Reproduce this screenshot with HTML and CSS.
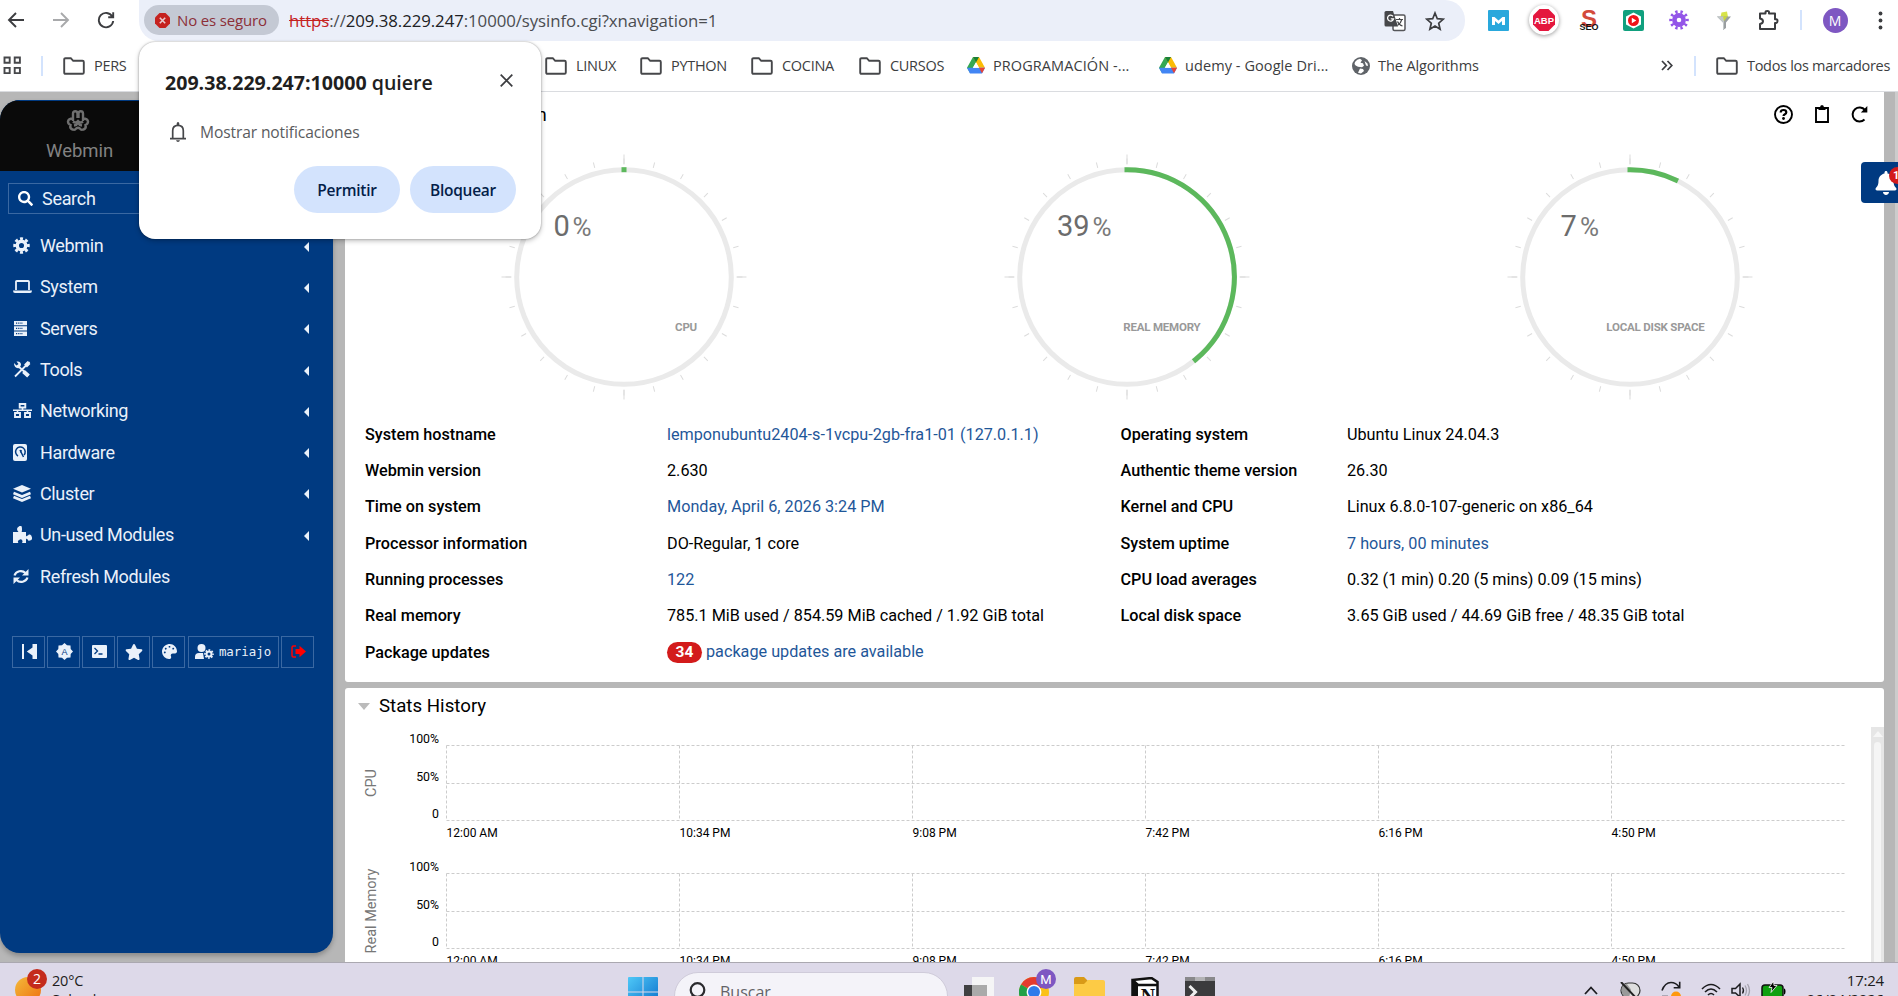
FILE: index.html
```
<!DOCTYPE html>
<html lang="es">
<head>
<meta charset="utf-8">
<title>System Information</title>
<link rel="stylesheet" href="styles.css">
</head>
<body>
<svg class="defs" width="0" height="0" aria-hidden="true">
  <symbol id="folder" viewBox="0 0 22 18"><path d="M1.2 2.5q0-1.3 1.3-1.3h5.3l2.4 2.6h9.3q1.3 0 1.3 1.3v10.4q0 1.3-1.3 1.3h-17q-1.3 0-1.3-1.3z" fill="none" stroke="#46474a" stroke-width="1.9"/></symbol>
  <symbol id="drive" viewBox="0 0 18 17"><path d="M6 0h6L6 10.5 3 16 0 10.8z" fill="#34a853"/><path d="M6 0h6l6 10.8h-6z" fill="#fbbc04"/><path d="M6 0h6L9 5.4z" fill="#188038"/><path d="M0 10.8h18L15 16.5H3z" fill="#4285f4"/><path d="M12 10.8h6L15 16.3z" fill="#ea4335"/><path d="M9 5.6l3 5.2H6z" fill="#fff"/></symbol>
  <symbol id="cog" viewBox="0 0 20 20"><circle cx="10" cy="10" r="5" fill="none" stroke="currentColor" stroke-width="4"/><circle cx="10" cy="10" r="8" fill="none" stroke="currentColor" stroke-width="3.4" pathLength="80" stroke-dasharray="5.6 4.4" stroke-dashoffset="2.8"/></symbol>
</svg>

<div class="screen">
  <header class="toolbar">
    <svg class="c" width="18" height="18" viewBox="0 0 18 18"><path d="M17 9H2M9 2L2 9l7 7" fill="none" stroke="#3c3d40" stroke-width="1.9"/></svg>
    <svg class="c" width="18" height="18" viewBox="0 0 18 18"><path d="M1 9h15M9 2l7 7-7 7" fill="none" stroke="#a8a9ab" stroke-width="1.9"/></svg>
    <svg class="c" width="18" height="18" viewBox="0 0 18 18"><path d="M15.3 5.5A7.2 7.2 0 1 0 16.2 10M16.2 1.2v5h-5" fill="none" stroke="#3c3d40" stroke-width="1.9"/></svg>
    <div class="omnibox">
      <span class="chip"><svg width="15" height="15" viewBox="0 0 15 15"><path d="M4.5 0h6L15 4.5v6L10.500 15h-6L0 10.500v-6z" fill="#c5221f"/><path d="M4.800 4.800l5.400 5.400M10.200 4.800l-5.400 5.400" stroke="#e9ccd0" stroke-width="1.600"/></svg>No es seguro</span>
      <span class="url"><s>https</s>://<b>209.38.229.247</b>:10000/sysinfo.cgi?xnavigation=1</span>
      <svg class="tr" width="22" height="22" viewBox="0 0 22 22"><rect x="9" y="5" width="12" height="15.500" rx="1.500" fill="#fff" stroke="#55565a" stroke-width="1.500"/><path d="M2 1h7l5 15.500H2q-1.500 0-1.500-1.500V2.500Q.5 1 2 1z" fill="#46474a"/><path d="M9 6.300A3 3 0 1 0 9.500 8.800H6.800" fill="none" stroke="#fff" stroke-width="1.300"/><path d="M12 9.500h7M15.500 8v1.500M17.800 9.500q-1 4-4.300 6M13.500 11.500q1.500 3.500 5 4.500" fill="none" stroke="#46474a" stroke-width="1.200"/></svg>
      <svg width="20" height="20" viewBox="0 0 20 20"><path d="M10 2l2.300 5.700 6 .5-4.600 4 1.400 6L10 15l-5.100 3.200 1.400-6-4.600-4 6-.5z" fill="none" stroke="#3c3d40" stroke-width="1.700"/></svg>
    </div>
    <div class="exts">
      <svg width="21" height="21" viewBox="0 0 21 21"><rect width="21" height="21" rx="1" fill="#29a8dc"/><path d="M4 15V7h2.500l4 3.500 4-3.500H17v8h-3v-4l-3.500 3L7 11v4z" fill="#fff"/></svg>
      <span class="abp-ring"><svg width="22" height="22" viewBox="0 0 22 22"><path d="M6.500 0h9L22 6.500v9L15.500 22h-9L0 15.500v-9z" fill="#e4173e"/><text x="11" y="14.600" class="abp">ABP</text></svg></span>
      <svg width="22" height="34" viewBox="0 -7 22 34"><text x="11" y="17" class="s-red">S</text><text x="11" y="19.500" class="seo">SEO</text></svg>
      <svg width="21" height="21" viewBox="0 0 21 21"><rect width="21" height="21" rx="2" fill="#11a07e"/><path d="M10.500 2.500l7.500 4v8l-7.500 4-7.500-4v-8z" fill="#fff"/><circle cx="10.500" cy="10.500" r="5.500" fill="#f01318"/><path d="M8.800 7.800v5.400l4.500-2.700z" fill="#fff"/></svg>
      <svg class="purple" width="20" height="20" viewBox="0 0 20 20"><circle cx="10" cy="10" r="4.600" fill="none" stroke="currentColor" stroke-width="4.600"/><circle cx="10" cy="10" r="8.200" fill="none" stroke="currentColor" stroke-width="3.200" pathLength="100" stroke-dasharray="4.500 5.500" stroke-dashoffset="2.250"/></svg>
      <svg width="14" height="19" viewBox="0 0 14 19"><path d="M3.500 6l1-4.500 5.500-1L11 6z" fill="#d7e34a"/><path d="M0 5.500h14L9 11.500V17l-3 2v-7.500z" fill="#9a9fa1"/><path d="M0 5.500h7V19l-1-1v-6.500z" fill="#c2c7c8"/><path d="M6 5.500h4.500L7 10z" fill="#c9d63a"/></svg>
      <svg width="21" height="22" viewBox="0 0 21 22"><path d="M2 4.500h5.500V3.300q0-1.300 1.800-1.300T11 3.300v1.200h6v5.700h1.200q1.300 0 1.300 1.800t-1.300 2H17V20H2v-5q3-.5 3-2.700T2 9.500z" fill="none" stroke="#3c3d40" stroke-width="2" stroke-linejoin="round"/></svg>
      <i class="sep"></i>
      <span class="avatar">M</span>
      <svg width="5" height="19" viewBox="0 0 5 19"><g fill="#3c3d40"><circle cx="2.500" cy="2.500" r="1.900"/><circle cx="2.500" cy="9.500" r="1.900"/><circle cx="2.500" cy="16.500" r="1.900"/></g></svg>
    </div>
  </header>

  <nav class="bookmarks">
    <svg width="19" height="19" viewBox="0 0 19 19"><path d="M1.500 1.500h5.200v5.200H1.500zM11.700 1.500h5.200v5.200h-5.200zM1.500 11.900h5.200v5.200H1.500zM11.700 11.900h5.200v5.200h-5.200z" fill="none" stroke="#46474a" stroke-width="1.900"/></svg>
    <i class="sep"></i>
    <span class="bm"><svg class="fo"><use href="#folder"/></svg>PERS</span>
    <span class="bm"><svg class="fo"><use href="#folder"/></svg>LINUX</span>
    <span class="bm"><svg class="fo"><use href="#folder"/></svg>PYTHON</span>
    <span class="bm"><svg class="fo"><use href="#folder"/></svg>COCINA</span>
    <span class="bm"><svg class="fo"><use href="#folder"/></svg>CURSOS</span>
    <span class="bm prog"><svg class="dr"><use href="#drive"/></svg>PROGRAMACIÓN -...</span>
    <span class="bm prog"><svg class="dr"><use href="#drive"/></svg>udemy - Google Dri...</span>
    <span class="bm alg"><svg class="gl" viewBox="0 0 18 18"><circle cx="9" cy="9" r="9" fill="#5f6368"/><path d="M3 5q2-3 5-3.300l2 1.500-1.500 2.500 2.500.5 1 2.500-2 1.500-4-.5Q3 8.500 2.500 7zM8 11.500l3 .5 1 2-3 2.500-3-.8zM12.500 4l3 2.500.5 2.500-2-.5z" fill="#fff"/></svg>The Algorithms</span>
    <svg width="12" height="11" viewBox="0 0 12 11"><path d="M1 1l4.300 4.500L1 10M6.500 1l4.300 4.500L6.500 10" fill="none" stroke="#3c3d40" stroke-width="1.700"/></svg>
    <i class="sep"></i>
    <span class="bm all"><svg class="fo"><use href="#folder"/></svg>Todos los marcadores</span>
  </nav>

  <div class="page">
    <aside class="sidebar">
      <div class="brand">
        <svg width="24" height="22" viewBox="0 0 24 22"><path d="M7 11V3.500Q7 1.300 9.200 1.300T11.500 3.500V8M12.500 8V3.500Q12.500 1.300 14.700 1.300T17 3.500V11M7 8.500q-4.500 0-5 3 0 2.500 2.500 3.500-1 3.500 2 4.500 2.500 1 3.700-1 1.800-1.500 3.600 0 1.200 2 3.700 1 3-1 2-4.500 2.500-1 2.500-3.500-.5-3-5-3M7 11.500q2.500 2 5-.5 2.500 2.500 5 .5M8 15.500q3-.5 4-2.500 1 2 4 2.500" fill="none" stroke="#6f6f6f" stroke-width="2.400"/></svg>
        <span>Webmin</span>
      </div>
      <div class="search"><svg width="15" height="15" viewBox="0 0 512 512"><path fill="#fff" d="M505 442.700L405.300 343c-4.500-4.500-10.600-7-17-7H372c27.600-35.300 44-79.700 44-128C416 93.100 322.900 0 208 0S0 93.100 0 208s93.100 208 208 208c48.300 0 92.700-16.400 128-44v16.300c0 6.400 2.500 12.500 7 17l99.700 99.700c9.400 9.400 24.600 9.400 33.900 0l28.300-28.300c9.400-9.400 9.400-24.600.1-34zM208 336c-70.700 0-128-57.200-128-128 0-70.700 57.200-128 128-128 70.700 0 128 57.200 128 128 0 70.700-57.200 128-128 128z"/></svg>Search</div>
      <ul class="menu">
        <li><svg width="17" height="17" viewBox="0 0 20 20"><use href="#cog"/></svg>Webmin<i></i></li>
        <li><svg width="19" height="13" viewBox="0 0 19 13"><path d="M3 10V1.800q0-.8.800-.8h11.400q.8 0 .8.800V10" fill="none" stroke="currentColor" stroke-width="1.800"/><path d="M0 10.500h19q0 2.500-2 2.500H2q-2 0-2-2.500z" fill="currentColor"/></svg>System<i></i></li>
        <li><svg width="15" height="15" viewBox="0 0 15 15"><path d="M1 0h13v4.300H1zM1 5.300h13v4.300H1zM1 10.600h13v4.300H1z" fill="currentColor"/><path d="M3 2.100h7M3 7.400h7M3 12.700h7" stroke="#003a81" stroke-width="1.200" stroke-dasharray="1.200 1"/></svg>Servers<i></i></li>
        <li><svg width="18" height="17" viewBox="0 0 18 17"><path d="M16.500 1L2 15.500M5 5l10.500 9.500" stroke="currentColor" stroke-width="1.800" fill="none"/><path d="M10.500 10.500l5 4.500M12.500 5l3.500-3.500" stroke="currentColor" stroke-width="4"/><path d="M1 2l2.500 2.500L5.500 3 3.500.5Q8-.2 8 4L6.500 7Q1 8 1 2z" fill="currentColor"/></svg>Tools<i></i></li>
        <li><svg width="19" height="15" viewBox="0 0 19 15"><path d="M6.700 1h5.600v3.500H6.700zM2 10h5v4H2zM12 10h5v4h-5z" fill="none" stroke="currentColor" stroke-width="1.900"/><path d="M0 7.300h19M9.500 5v2.500M4.500 7.500V10M14.500 7.500V10" stroke="currentColor" stroke-width="1.600"/></svg>Networking<i></i></li>
        <li><svg width="15" height="17" viewBox="0 0 15 17"><rect x="0" width="14" height="17" rx="2" fill="currentColor"/><path d="M5 12a4.800 4.800 0 1 1 6-1M7 6l3.500 7M8 6v3" fill="none" stroke="#003a81" stroke-width="1.500"/></svg>Hardware<i></i></li>
        <li><svg width="18" height="17" viewBox="0 0 18 17"><path d="M9 0l9 3.800-9 3.800L0 3.800z" fill="currentColor"/><path d="M.5 8L9 11.500 17.500 8M.5 12L9 15.500l8.500-3.500" fill="none" stroke="currentColor" stroke-width="2.600"/></svg>Cluster<i></i></li>
        <li><svg width="19" height="17" viewBox="0 0 19 17"><path d="M0 6h5.500q-1.500-1.500-1.500-3T6.500 0 9 3 7.500 6H13v4.500q1-1 2-1 .5-1.500 2-1t2 3-2 3-2-1q-1 0-2-1V17H9q1-1.500 0-3t-3 0-.5 3H0z" fill="currentColor"/></svg>Un-used Modules<i></i></li>
        <li><svg width="16" height="15" viewBox="0 0 16 15"><path d="M1.500 6.500A6.500 6 0 0 1 12.500 4M14.500 8.500A6.500 6 0 0 1 3.500 11" fill="none" stroke="currentColor" stroke-width="2.200"/><path d="M15.500 0v6.500H9zM.5 15V8.500H7z" fill="currentColor"/></svg>Refresh Modules</li>
      </ul>
      <div class="tools">
        <span><svg width="15" height="15" viewBox="0 0 15 15"><path d="M0 0h2v15H0zM10.500 0H15v15h-4.500v-3.500L4.800 7.500l5.700-4z" fill="currentColor"/></svg></span>
        <span><svg width="17" height="17" viewBox="0 0 17 17"><path d="M8.500 0L11 2.300l3.500.2.200 3.500L17 8.500 14.700 11l-.2 3.500-3.500.2L8.500 17 6 14.700l-3.500-.2L2.300 11 0 8.500 2.300 6l.2-3.500L6 2.300z" fill="currentColor"/><text x="8.500" y="12" class="auto">A</text></svg></span>
        <span><svg width="15" height="13" viewBox="0 0 15 13"><rect width="15" height="13" rx="1" fill="currentColor"/><path d="M2.500 3L5.500 6l-3 3M6.500 9h4" fill="none" stroke="#003a81" stroke-width="1.300"/></svg></span>
        <span><svg width="18" height="16" viewBox="0 0 576 512"><path fill="currentColor" d="M259.300 17.800L194 150.200 47.900 171.500c-26.200 3.800-36.700 36.100-17.700 54.600l105.700 103-25 145.500c-4.500 26.300 23.200 46 46.400 33.700L288 439.600l130.700 68.700c23.200 12.200 50.900-7.400 46.400-33.700l-25-145.500 105.700-103c19-18.500 8.500-50.800-17.700-54.600L382 150.200 316.700 17.800c-11.700-23.600-45.600-23.900-57.400 0z"/></svg></span>
        <span><svg width="15" height="15" viewBox="0 0 512 512"><path fill="currentColor" d="M204.300 5C104.900 24.400 24.800 104.300 5.200 203.400c-37 187 131.700 326.400 258.800 306.700 41.200-6.400 61.400-54.600 42.500-91.700-23.100-45.400 9.900-98.400 60.900-98.400h79.700c35.800 0 64.800-29.600 64.900-65.300C511.500 97.100 368.100-26.900 204.300 5zM96 320c-17.700 0-32-14.300-32-32s14.300-32 32-32 32 14.300 32 32-14.300 32-32 32zm32-128c-17.700 0-32-14.300-32-32s14.300-32 32-32 32 14.300 32 32-14.300 32-32 32zm128-64c-17.700 0-32-14.300-32-32s14.300-32 32-32 32 14.300 32 32-14.300 32-32 32zm128 64c-17.700 0-32-14.300-32-32s14.300-32 32-32 32 14.300 32 32-14.300 32-32 32z"/></svg></span>
        <span class="user"><svg width="19" height="15" viewBox="0 0 19 15"><circle cx="6.500" cy="4" r="4" fill="currentColor"/><path d="M0 15v-2q0-4 4-4h4l1 6z" fill="currentColor"/><g transform="translate(9 5) scale(.5)"><use href="#cog" width="20" height="20"/></g></svg>mariajo</span>
        <span class="exit"><svg width="15" height="13" viewBox="0 0 15 13"><path d="M5 1H2.500Q1 1 1 2.500v8Q1 12 2.500 12H5" fill="none" stroke="currentColor" stroke-width="1.500"/><path d="M4.500 4h4V.8L15 6.500l-6.500 5.700V9h-4z" fill="currentColor"/></svg></span>
      </div>
    </aside>

    <main class="main">
      <section class="panel info">
        <div class="info-head">
          <h1>System Information</h1>
          <div class="acts">
            <svg width="19" height="19" viewBox="0 0 19 19"><circle cx="9.500" cy="9.500" r="8.500" fill="none" stroke="#000" stroke-width="1.900"/><path d="M6.700 7.500q0-2.500 2.800-2.500t2.800 2.300q0 1.200-1.400 1.900T9.500 11" fill="none" stroke="#000" stroke-width="2.200"/><circle cx="9.500" cy="13.500" r="1.400"/></svg>
            <svg width="14" height="18" viewBox="0 0 14 18"><path d="M1 3h12v14H1z" fill="none" stroke="#000" stroke-width="1.900"/><path d="M3.500 5V2.500H5Q5 0 7 0t2 2.500h1.500V5z"/></svg>
            <svg width="17" height="18" viewBox="0 0 17 18"><path d="M14 5A7 7 0 1 0 13.500 14.500" fill="none" stroke="#000" stroke-width="2"/><path d="M16.300 1v6.500H9.800z"/></svg>
          </div>
        </div>
        <div class="gauges">
          <svg class="gauge" viewBox="-130 -130 260 260"><circle class="t" r="115.800" pathLength="360" stroke-dasharray=".5 14.500" stroke-dashoffset=".25"/><circle class="T" r="117.500" pathLength="360" stroke-dasharray=".5 89.500" stroke-dashoffset=".25"/><circle class="ring" r="107.300"/><path class="arc" d="M0-107.300h.01"/><text class="num" x="-70.500" y="-41">0</text><text class="pct" x="-51.500" y="-41">%</text><text class="lab" x="73" y="54">CPU</text></svg>
          <svg class="gauge" viewBox="-130 -130 260 260"><circle class="t" r="115.800" pathLength="360" stroke-dasharray=".5 14.500" stroke-dashoffset=".25"/><circle class="T" r="117.500" pathLength="360" stroke-dasharray=".5 89.500" stroke-dashoffset=".25"/><circle class="ring" r="107.300"/><path class="arc" d="M0-107.300A107.300 107.300 0 0 1 68.400 82.700"/><text class="num" x="-70" y="-41">39</text><text class="pct" x="-34.500" y="-41">%</text><text class="lab" x="73.500" y="54">REAL MEMORY</text></svg>
          <svg class="gauge" viewBox="-130 -130 260 260"><circle class="t" r="115.800" pathLength="360" stroke-dasharray=".5 14.500" stroke-dashoffset=".25"/><circle class="T" r="117.500" pathLength="360" stroke-dasharray=".5 89.500" stroke-dashoffset=".25"/><circle class="ring" r="107.300"/><path class="arc" d="M0-107.300A107.300 107.300 0 0 1 45.700-97.100"/><text class="num" x="-69.500" y="-41">7</text><text class="pct" x="-50" y="-41">%</text><text class="lab" x="74.500" y="54">LOCAL DISK SPACE</text></svg>
        </div>
        <dl class="facts">
          <dt>System hostname</dt><dd><a>lemponubuntu2404-s-1vcpu-2gb-fra1-01 (127.0.1.1)</a></dd><dt>Operating system</dt><dd>Ubuntu Linux 24.04.3</dd>
          <dt>Webmin version</dt><dd>2.630</dd><dt>Authentic theme version</dt><dd>26.30</dd>
          <dt>Time on system</dt><dd><a>Monday, April 6, 2026 3:24 PM</a></dd><dt>Kernel and CPU</dt><dd>Linux 6.8.0-107-generic on x86_64</dd>
          <dt>Processor information</dt><dd>DO-Regular, 1 core</dd><dt>System uptime</dt><dd><a>7 hours, 00 minutes</a></dd>
          <dt>Running processes</dt><dd><a>122</a></dd><dt>CPU load averages</dt><dd>0.32 (1 min) 0.20 (5 mins) 0.09 (15 mins)</dd>
          <dt>Real memory</dt><dd>785.1 MiB used / 854.59 MiB cached / 1.92 GiB total</dd><dt>Local disk space</dt><dd>3.65 GiB used / 44.69 GiB free / 48.35 GiB total</dd>
          <dt>Package updates</dt><dd><a><b class="count">34</b>package updates are available</a></dd>
        </dl>
      </section>

      <section class="panel stats">
        <h2><i></i>Stats History</h2>
        <div class="stats-body">
          <div class="charts">
            <svg class="chart" viewBox="0 0 1526 128">
              <path class="grid" d="M101.500 18.500h1399M101.500 56.500h1399M101.500 93.500h1399M101.500 18.500v75M334.500 18.500v75M567.500 18.500v75M800.500 18.500v75M1033.500 18.500v75M1266.500 18.500v75"/>
              <text class="axis" x="26" y="56" transform="rotate(-90 26 56)">CPU</text>
              <g class="y"><text x="94" y="16">100%</text><text x="94" y="54">50%</text><text x="94" y="91">0</text></g>
              <g><text x="101.500" y="110">12:00 AM</text><text x="334.500" y="110">10:34 PM</text><text x="567.500" y="110">9:08 PM</text><text x="800.500" y="110">7:42 PM</text><text x="1033.500" y="110">6:16 PM</text><text x="1266.500" y="110">4:50 PM</text></g>
            </svg>
            <svg class="chart" viewBox="0 0 1526 128">
              <path class="grid" d="M101.500 18.500h1399M101.500 56.500h1399M101.500 93.500h1399M101.500 18.500v75M334.500 18.500v75M567.500 18.500v75M800.500 18.500v75M1033.500 18.500v75M1266.500 18.500v75"/>
              <text class="axis" x="26" y="56" transform="rotate(-90 26 56)">Real Memory</text>
              <g class="y"><text x="94" y="16">100%</text><text x="94" y="54">50%</text><text x="94" y="91">0</text></g>
              <g><text x="101.500" y="110">12:00 AM</text><text x="334.500" y="110">10:34 PM</text><text x="567.500" y="110">9:08 PM</text><text x="800.500" y="110">7:42 PM</text><text x="1033.500" y="110">6:16 PM</text><text x="1266.500" y="110">4:50 PM</text></g>
            </svg>
          </div>
          <div class="scroll"><i></i><b></b></div>
        </div>
      </section>
    </main>
    <div class="edge"></div>
    <div class="bell"><svg width="22" height="24" viewBox="0 0 448 512"><path fill="#fff" d="M224 512c35.320 0 63.970-28.650 63.970-64H160.030c0 35.350 28.650 64 63.970 64zm215.390-149.710c-19.320-20.760-55.470-51.990-55.470-154.290 0-77.700-54.480-139.900-127.940-155.160V32c0-17.670-14.320-32-31.980-32s-31.980 14.330-31.980 32v20.840C118.560 68.100 64.080 130.300 64.080 208c0 102.300-36.150 133.530-55.470 154.290-6 6.450-8.660 14.160-8.610 21.710.11 16.400 12.980 32 32.100 32h383.800c19.120 0 32-15.600 32.100-32 .05-7.550-2.610-15.270-8.610-21.710z"/></svg><b>1</b></div>
  </div>

  <footer class="taskbar">
    <div class="weather"><i></i><b>2</b></div>
    <div class="wtext"><span>20°C</span><span>Soleado</span></div>
    <svg class="win" width="30" height="30" viewBox="0 0 30 30"><defs><linearGradient id="wg" x2="1" y2="1"><stop stop-color="#4fc8f7"/><stop offset="1" stop-color="#0a6fcb"/></linearGradient></defs><path d="M0 1q0-1 1-1h13.500v14.500H0zM15.500 0H29q1 0 1 1v13.500H15.500zM0 15.500h14.500V30H0zM15.500 15.500H30V30H15.500z" fill="url(#wg)"/></svg>
    <div class="find"><svg width="18" height="22" viewBox="0 0 18 22"><circle cx="9.500" cy="8" r="6.800" fill="none" stroke="#2a2a2e" stroke-width="2.200"/><path d="M5 13.500L1 19" stroke="#2a2a2e" stroke-width="2.400"/></svg>Buscar</div>
    <svg class="app" width="30" height="30" viewBox="0 0 30 30"><rect x="8" width="22" height="28" fill="#f5f5f6"/><rect x="0" y="8" width="23" height="22" fill="#aaa"/><rect x="0" y="8" width="8" height="22" fill="#404042"/></svg>
    <svg class="app ch" width="38" height="38" viewBox="0 0 38 38"><circle cx="15" cy="23" r="15" fill="#fbc116"/><path d="M15 23L2 15.500A15 15 0 0 1 28 15.500z" fill="#e33b2e"/><path d="M15 23L2 15.500A15 15 0 0 0 15 38z" fill="#23a047"/><circle cx="15" cy="23" r="7.400" fill="#fff"/><circle cx="15" cy="23" r="6" fill="#2f7bea"/><circle cx="27" cy="10" r="10" fill="#7e57c2"/><text x="27" y="14.500" class="chm">M</text></svg>
    <svg class="app fd" width="31" height="30" viewBox="0 0 31 30"><path d="M0 2q0-2 2-2h8l4 4h16v8H0z" fill="#d99a17"/><path d="M0 7h10l4-4h15q2 0 2 2v25H0z" fill="#fdcb45"/></svg>
    <svg class="app" width="28" height="30" viewBox="0 0 28 30"><path d="M1.500 3l19-2 6 4v25h-20l-5-6z" fill="#fff" stroke="#111" stroke-width="2.500"/><path d="M1.500 3l5.500 5h20" fill="none" stroke="#111" stroke-width="2.500"/><path d="M2 4l5 4v22l-5-6z" fill="#111"/><text x="17" y="26" class="notion">N</text></svg>
    <svg class="app" width="30" height="30" viewBox="0 0 30 30"><rect width="30" height="30" rx="1" fill="#3b3b3d"/><path d="M0 0h30v4H0z" fill="#89898b"/><path d="M10 0h10v4H10z" fill="#b3b3b5"/><path d="M4.500 9l6 6-6 6" fill="none" stroke="#eee" stroke-width="3"/></svg>
    <svg class="chev" width="14" height="9" viewBox="0 0 14 9"><path d="M1 8l6-6.500L13 8" fill="none" stroke="#1d1d20" stroke-width="1.800"/></svg>
    <svg class="mouse" width="22" height="20" viewBox="0 0 22 20"><rect x="1" y="1" width="19" height="15" rx="7.500" fill="#dedede" stroke="#333" stroke-width="1.200"/><path d="M1.600 8.500q0-6 5-7l4.400 6-2 8Q1.600 15 1.600 8.500z" fill="#9a9a9a"/><path d="M1 0l17 18" stroke="#222" stroke-width="2"/></svg>
    <svg class="sync" width="20" height="21" viewBox="0 0 20 21"><path d="M1 9.500Q4 1.500 10 1.500q5 0 8 4.500M18.700.8v6h-6M1 15.500h6" fill="none" stroke="#1d1d20" stroke-width="1.600"/><circle cx="15" cy="15.500" r="5" fill="#ff980e"/></svg>
    <svg class="wifi" width="20" height="18" viewBox="0 0 20 18"><path d="M1 7q9-9 18 0M4 10q6-6 12 0M7 13q3-3 6 0" fill="none" stroke="#1d1d20" stroke-width="1.600"/><circle cx="10" cy="16" r="1.600"/></svg>
    <svg class="vol" width="20" height="18" viewBox="0 0 20 18"><path d="M1 6.500h3.500L9 2v13l-4.500-4H1z" fill="none" stroke="#1d1d20" stroke-width="1.500"/><path d="M11.500 5.500q2 3 0 6" fill="none" stroke="#1d1d20" stroke-width="1.300"/><path d="M14 3.500q3 5 0 10M16.500 2q4 6.500 0 13" fill="none" stroke="#a5a2ae" stroke-width="1.300"/></svg>
    <svg class="batt" width="25" height="20" viewBox="0 0 25 20"><rect x="1" y="4" width="21" height="13" rx="3" fill="#10a010" stroke="#111" stroke-width="1.500"/><path d="M23 7.500q1.500 0 1.500 3t-1.500 3z"/><path d="M12.500 0L8 6.500h3l-1 5 6-7h-3z" stroke="#fff" stroke-width=".8"/></svg>
    <div class="clock"><span>17:24</span><span>06/04/2026</span></div>
  </footer>

  <div class="popup">
    <div class="ptitle"><span><b>209.38.229.247:10000</b> quiere</span><svg width="13" height="13" viewBox="0 0 13 13"><path d="M.7.7l11.600 11.600M12.300.7L.7 12.300" stroke="#3c3d40" stroke-width="1.700"/></svg></div>
    <div class="pline"><svg width="16" height="20" viewBox="0 0 16 20"><path d="M0 16.700h16M2.700 16.500V8.700Q2.700 3.300 8 3.300t5.300 5.400v7.800" fill="none" stroke="#46474a" stroke-width="1.700"/><path d="M8 0q1.300 0 1.300 1.500V3H6.700V1.500Q6.700 0 8 0zM6 18.200h4Q9.500 20 8 20t-2-1.800z" fill="#46474a"/></svg>Mostrar notificaciones</div>
    <div class="pbtns"><span>Permitir</span><span>Bloquear</span></div>
  </div>
</div>
</body>
</html>
```
FILE: styles.css
```
* { box-sizing: border-box; }
body { margin: 0; background: #fff; }
.defs { position: absolute; }
.screen { position: relative; width: 1898px; height: 996px; overflow: hidden; display: flex; flex-direction: column; font-family: "Open Sans", sans-serif; color: #3c3d40; }
svg { display: block; flex: none; }

/* browser toolbar */
.toolbar { height: 41px; display: grid; grid-template-columns: 38px 44px 57px 1326px 433px; align-items: center; flex: none; }
.toolbar .c { margin-top: -2px; margin-left: 7px; }
.toolbar .c:nth-child(2) { margin-left: 14px; }
.toolbar .c:nth-child(3) { margin-left: 15px; }
.omnibox { height: 41px; background: #ebeff9; border-radius: 0 20px 20px 20px; display: flex; align-items: center; padding: 0 20px 0 5px; }
.chip { width: 135px; height: 30px; margin-top: -1px; border-radius: 15px; background: #c4c9d4; color: #8c2f38; font-size: 15px; font-weight: 500; letter-spacing: -.15px; display: flex; align-items: center; gap: 7px; padding-left: 11px; white-space: nowrap; }
.url { flex: 1; margin-left: 10px; font-size: 16.800px; letter-spacing: -.06px; color: #4a4c50; white-space: nowrap; }
.url s { color: #c5221f; }
.url b { font-weight: 400; color: #202124; }
.omnibox .tr { margin-right: 19px; }
.exts { display: grid; grid-template-columns: 11px repeat(7, 45px) 20px 48px 43px; align-items: center; justify-items: center; height: 41px; margin-top: -1px; }
.exts > :first-child { grid-column: 2; }
.abp-ring { width: 30px; height: 30px; border-radius: 50%; background: #fff; box-shadow: 0 1px 4px rgba(0,0,0,.4); display: grid; place-items: center; }
.abp { font: bold 9.5px "Liberation Sans", sans-serif; fill: #fff; text-anchor: middle; }
.s-red { font: bold 24px "Liberation Sans", sans-serif; fill: #d34a3b; text-anchor: middle; }
.seo { font: bold 9px "Liberation Sans", sans-serif; fill: #111; text-anchor: middle; }
.purple { color: #9355e8; }
.sep { display: block; width: 2px; height: 20px; background: #d3e3fd; }
.avatar { width: 25px; height: 25px; border-radius: 50%; background: #7e57c2; color: #fff; font-size: 14px; display: grid; place-items: center; }

.bookmarks { height: 51px; flex: none; border-bottom: 1px solid #dadce0; padding: 0 0 1px 3px; display: grid; grid-template-columns: 38px 22px 482px 95px 111px 108px 108px 192px 193px 309px 33px 22px 1fr; align-items: center; font-size: 14.5px; letter-spacing: -.3px; white-space: nowrap; }
.bm { display: flex; align-items: center; }
.prog { letter-spacing: .08px; }
.alg { letter-spacing: -.1px; }
.fo { width: 22px; height: 18px; margin-right: 9px; }
.dr { width: 18px; height: 17px; margin-right: 8px; }
.gl { width: 18px; height: 18px; margin-right: 8px; }

/* page */
.page { position: relative; height: 870px; flex: none; background: #b7b7b7; display: flex; font-family: Roboto, sans-serif; color: #000; overflow: hidden; }
.sidebar { width: 333px; height: 853px; margin-top: 8px; background: #003a81; border-radius: 20px; overflow: hidden; color: #eaf1fa; box-shadow: 0 3px 5px rgba(0,0,0,.25); flex: none; }
.brand { height: 71px; background: #0a0a0a; border-top: 1px solid #003a81; color: #828282; font-size: 18.500px; display: flex; flex-direction: column; align-items: flex-start; }
.brand svg { margin: 9px 0 0 66px; }
.brand span { margin: 8px 0 0 46px; line-height: 22px; }
.search { height: 31px; margin: 12px 8px 0; border: 1px solid #3a68a2; display: flex; align-items: center; gap: 9px; padding-left: 9px; font-size: 18px; letter-spacing: -.3px; }
.menu { list-style: none; margin: 11px 0 0; padding: 0; font-size: 18px; letter-spacing: -.36px; }
.menu li { height: 41.300px; display: grid; grid-template-columns: 27px 1fr 8px; align-items: center; padding: 0 21px 0 13px; }
.menu li i { border: 5px solid transparent; border-left: 0; border-right: 5px solid #eaf1fa; width: 0; height: 0; margin-top: 2px; }
.tools { display: flex; gap: 2px; margin: 39px 0 0 12px; }
.tools span { width: 33px; height: 32px; border: 1px solid #3a68a2; display: flex; align-items: center; justify-content: center; padding-left: 1px; }
.tools .user { width: 91px; gap: 5px; font: 12.400px "DejaVu Sans Mono", monospace; margin-left: 1px; padding: 0 1px 0 0; }
.tools .exit { color: #f00; }
.auto { font: 9px "Liberation Sans", sans-serif; fill: #003a81; text-anchor: middle; }

.main { margin-left: 12px; width: 1539px; display: flex; flex-direction: column; gap: 6px; flex: none; }
.panel { background: #fff; border-radius: 3px; flex: none; }
.info { height: 590px; border-radius: 0 0 3px 3px; }
.info-head { height: 45px; display: flex; justify-content: space-between; align-items: center; padding: 0 16px 1px 44px; }
.info-head h1 { margin: 0; font-size: 18px; font-weight: 400; }
.acts { display: flex; align-items: center; gap: 22px; }
.gauges { display: flex; gap: 243px; padding-left: 149px; margin-top: 10px; height: 272px; }
.gauge { width: 260px; height: 260px; }
.gauge circle { fill: none; transform: rotate(-90deg); }
.gauge .t { stroke: #dcdcdc; stroke-width: 5.500; }
.gauge .T { stroke: #dcdcdc; stroke-width: 10; }
.gauge .ring { stroke: #eaeaea; stroke-width: 5; }
.gauge .arc { fill: none; stroke: #5cb85c; stroke-width: 5; stroke-linecap: square; }
.gauge .num { font-size: 29px; fill: #6c6c6c; }
.gauge .pct { font-size: 26px; fill: #7a7a7a; }
.gauge .lab { font-size: 11.500px; font-weight: 700; fill: #999; text-anchor: end; letter-spacing: -.2px; }
.facts { margin: -3px 0 0; padding-left: 20px; display: grid; grid-template-columns: 302px 453.500px 226.500px 1fr; grid-auto-rows: 36.350px; align-items: center; font-size: 16.220px; white-space: nowrap; }
.facts dt { font-weight: 500; }
.facts dd { margin: 0; }
.facts a { color: #1f5799; }
.count { display: inline-block; background: #d31b1b; color: #fff; border-radius: 11px; line-height: 21px; width: 35px; text-align: center; margin-right: 4px; font-size: 15.500px; }

.stats { height: 300px; }
.stats h2 { margin: 0; height: 39px; padding: 0 0 3px 13px; display: flex; align-items: center; gap: 9px; font-size: 18.700px; font-weight: 400; }
.stats h2 i { border: 6px solid transparent; border-top: 7px solid #bbb; border-bottom: 0; }
.stats-body { display: flex; }
.charts { width: 1526px; }
.chart { width: 1526px; height: 128px; }
.chart text { font-size: 12px; dominant-baseline: auto; }
.chart .y text { text-anchor: end; font-size: 12.300px; }
.chart .axis { font-size: 14.500px; fill: #777; text-anchor: middle; dominant-baseline: central; }
.grid { fill: none; stroke: #ccc; stroke-dasharray: 3 2; }
.scroll { width: 13px; height: 260px; background: #e6e6e6; display: flex; flex-direction: column; align-items: center; }
.scroll i { border: 5px solid transparent; border-bottom: 6px solid #f6f6f6; border-top: 0; margin: 4px 0 5px; }
.scroll b { width: 7px; flex: 1; background: #f5f5f5; border-radius: 4px; }
.edge { margin-left: auto; width: 3px; background: #ccc; }
.bell { position: absolute; right: 0; top: 70px; width: 37px; height: 41px; background: #003a81; border-radius: 4px 0 0 4px; }
.bell svg { margin: 9px 0 0 14px; }
.bell b { position: absolute; left: 28px; top: 5px; width: 17px; height: 17px; border-radius: 50%; background: #d31b1b; color: #fff; font-size: 11px; line-height: 17px; padding-left: 4px; overflow: hidden; }

/* taskbar */
.taskbar { height: 34px; flex: none; background: #ddd9e9; border-top: 1px solid #aaa8b0; display: flex; align-items: flex-start; overflow: hidden; }
.weather { position: relative; width: 37px; height: 33px; flex: none; }
.weather i { position: absolute; left: 15px; top: 14px; width: 26px; height: 26px; border-radius: 50%; background: linear-gradient(135deg, #f3ba3a, #ef6f10); }
.weather b { position: absolute; left: 27px; top: 6px; width: 20px; height: 20px; border-radius: 50%; background: #c42b1c; color: #fff; font-size: 14px; font-weight: 400; line-height: 20px; text-align: center; }
.wtext { width: 590px; padding: 8px 0 0 15px; font-size: 14.500px; line-height: 19px; letter-spacing: -.2px; color: #1d1d20; display: flex; flex-direction: column; }
.taskbar .win { margin-top: 14px; margin-left: 1px; }
.find { width: 274px; height: 48px; margin: 9px 0 0 16px; border-radius: 24px; background: #f4f3f9; border: 1px solid #cfcbda; display: flex; align-items: flex-start; padding: 8px 0 0 13px; gap: 14px; font-size: 16px; line-height: 23px; color: #626267; flex: none; }
.find svg { margin-top: 1px; }
.app { margin: 14px 0 0 16px; }
.app + .app { margin-left: 26px; }
.taskbar .ch { margin-top: 6px; margin-left: 25px; }
.taskbar .fd { margin-left: 17px; }
.chm { font: 13px Roboto, sans-serif; fill: #fff; text-anchor: middle; }
.notion { font: bold 20px "Liberation Serif", serif; fill: #111; text-anchor: middle; }
.chev { margin: 23px 0 0 369px; }
.mouse { margin: 19px 0 0 22px; }
.sync { margin: 18px 0 0 19px; }
.wifi { margin: 19px 0 0 20px; }
.vol { margin: 19px 0 0 10px; }
.batt { margin: 18px 0 0 10px; }
.clock { margin-left: auto; padding: 8px 14px 0 0; font-size: 15px; line-height: 19px; letter-spacing: -.2px; color: #1d1d20; display: flex; flex-direction: column; align-items: flex-end; }

/* permission prompt */
.popup { position: absolute; left: 139px; top: 42px; width: 402px; height: 197px; background: #fff; border-radius: 16px; box-shadow: 0 0 2px rgba(0,0,0,.35), 0 2px 5px rgba(0,0,0,.25); padding: 0 25px 0 26px; }
.ptitle { height: 58px; padding: 16px 3px 0 0; margin-top: 13px; display: flex; justify-content: space-between; align-items: flex-start; font-size: 19.600px; line-height: 24px; color: #1f1f1f; font-weight: 600; letter-spacing: 0; white-space: nowrap; }
.ptitle b { font-weight: 700; }
.ptitle svg { margin-top: 3px; }
.pline { display: flex; align-items: center; gap: 14px; padding-left: 5px; height: 38px; font-size: 15.600px; letter-spacing: -.12px; color: #5a5b5e; white-space: nowrap; }
.pbtns { display: flex; justify-content: flex-end; gap: 10px; margin-top: 15px; }
.pbtns span { width: 106px; height: 47px; border-radius: 24px; background: #d3e3fd; color: #041e49; font-size: 15.500px; font-weight: 600; letter-spacing: -.25px; display: grid; place-items: center; }
```
